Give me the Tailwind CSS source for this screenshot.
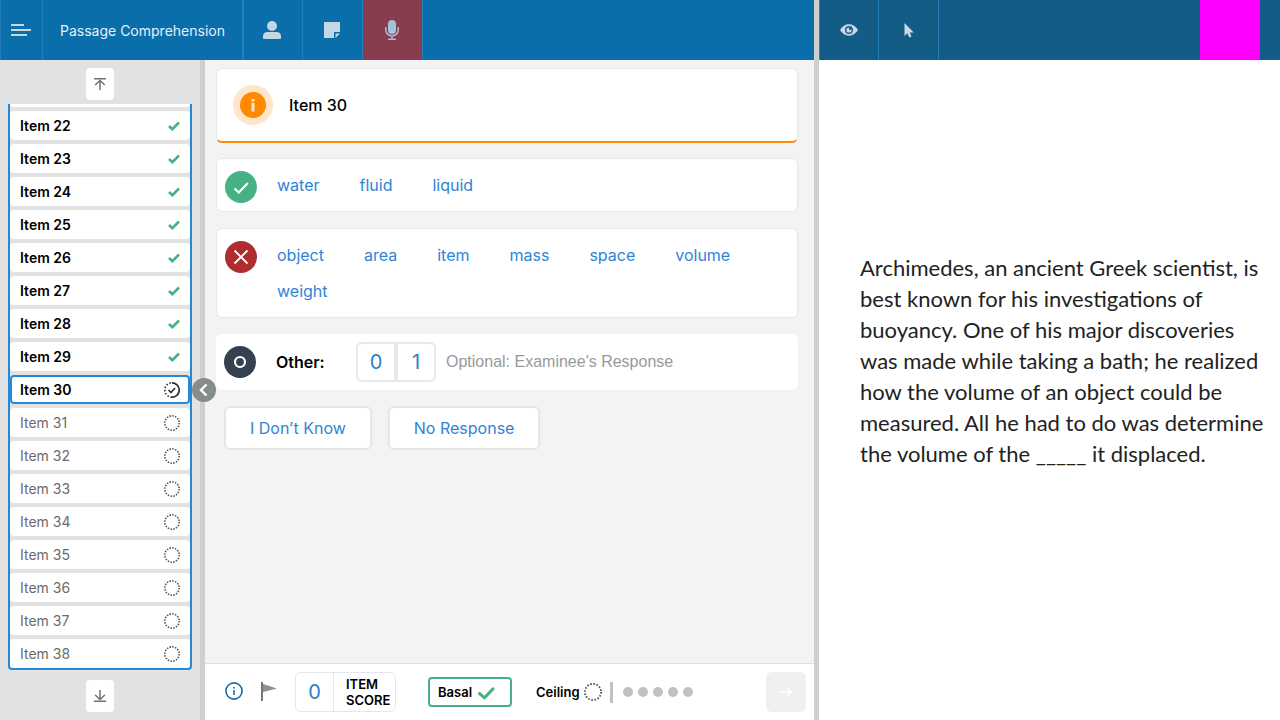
<!DOCTYPE html>
<html lang="en">
<head>
<meta charset="utf-8">
<title>Passage Comprehension</title>
<script src="https://cdn.jsdelivr.net/npm/@tailwindcss/browser@4"></script>
</head>
<body class="font-['Inter',sans-serif] text-black">
<svg class="hidden">
  <symbol id="tick" viewBox="0 0 12 10"><path d="M1 5l3.400 3.200L11 1.500" fill="none" stroke="#46b182" stroke-width="2.600"/></symbol>
  <symbol id="dots" viewBox="1 1 16 16"><circle cx="9" cy="9" r="7.200" fill="none" stroke="#555" stroke-width="1.600" stroke-dasharray="1.500 1.328"/></symbol>
</svg>
<div class="flex h-screen overflow-hidden">
  <div class="flex min-w-0 flex-[814] flex-col">
    <header class="flex h-[60px] shrink-0 bg-[#0a6eaa] text-[#c5d7e5]">
      <button aria-label="Menu" class="flex w-[43px] items-center justify-center border-x border-[#237eb9] pr-[2px]">
        <svg class="h-3 w-5" viewBox="0 0 20 12" stroke="currentColor" stroke-width="2"><path d="M0 1h13M0 6h20M0 11h16"/></svg>
      </button>
      <h1 class="flex w-[201px] items-center justify-center border-r-2 border-[#237eb9] pt-[2px] text-sm text-[#e6f0f7]">Passage Comprehension</h1>
      <button aria-label="Examinee" class="flex w-[59px] items-center justify-center border-r border-[#237eb9] pr-[2px]">
        <svg class="h-[18px] w-[18px]" viewBox="0 0 18 18" fill="currentColor"><circle cx="9" cy="5" r="5"/><path d="M0 18v-2.500Q0 11 4.500 11h9Q18 11 18 15.500V17q0 1-1 1H1q-1 0-1-1z"/></svg>
      </button>
      <button aria-label="Notes" class="flex w-[60px] items-center justify-center border-r border-[#237eb9] pr-[2px]">
        <svg class="h-4 w-4" viewBox="0 0 16 16" fill="currentColor"><path d="M0 0h16v10h-6v6H0z"/><path d="M11.500 11.500H16L11.500 16z"/></svg>
      </button>
      <button aria-label="Record audio" class="flex w-[60px] items-center justify-center border-r border-[#237eb9] bg-[#873d4e] pr-[2px]">
        <svg class="h-5 w-[14px]" viewBox="0 0 14 20"><rect x="3" y="0" width="8" height="14" rx="4" fill="#a3c3da"/><path d="M.8 7v3a6.200 5.800 0 0 0 12.400 0V7M7 16v3M3 19.200h8" fill="none" stroke="#a9bccb" stroke-width="1.500"/></svg>
      </button>
    </header>
    <div class="flex min-h-0 flex-1">
      <nav aria-label="Items" class="relative flex w-[205px] shrink-0 flex-col items-center border-r-[5px] border-[#cfcfcf] bg-[#e2e2e2] px-2 py-2">
        <button aria-label="First item" class="flex h-8 w-7 shrink-0 items-center justify-center rounded bg-white">
          <svg class="h-3 w-3" viewBox="0 0 12 12" fill="none" stroke="#6f7272" stroke-width="1.500"><path d="M0 .8h12M6 12V2.500M1.200 7L6 2.500 10.800 7"/></svg>
        </button>
        <ul id="items" class="mt-1 flex min-h-0 w-full flex-1 flex-col justify-end gap-1 overflow-hidden rounded-b border-x-2 border-b-2 border-[#2589d8]"></ul>
        <button aria-label="Last item" class="mt-[10px] flex h-8 w-7 shrink-0 items-center justify-center rounded bg-white">
          <svg class="h-3 w-3" viewBox="0 0 12 12" fill="none" stroke="#6f7272" stroke-width="1.500"><path d="M0 11.200h12M6 0v9.500M1.200 5L6 9.500 10.800 5"/></svg>
        </button>
        <button aria-label="Collapse items" class="absolute top-1/2 -right-4 z-10 flex h-6 w-6 -translate-y-1/2 items-center justify-center rounded-full bg-[#868b8b]">
          <svg class="h-3 w-3" viewBox="0 0 12 12" fill="none" stroke="#fff" stroke-width="2.400"><path d="M8.500 .5L3 6l5.500 5.500"/></svg>
        </button>
      </nav>
      <div class="flex min-w-0 flex-1 flex-col bg-[#f3f3f3]">
        <main class="flex-1 pt-2 pr-4 pl-[11px]">
          <section class="flex h-[75px] items-center gap-4 rounded-md border border-b-2 border-[#e3e6f1] border-b-[#ff8a00] bg-white px-4">
            <span class="flex h-10 w-10 items-center justify-center rounded-full bg-[#ffe6cb]">
              <svg class="h-[26px] w-[26px]" viewBox="0 0 26 26"><circle cx="13" cy="13" r="13" fill="#ff8a00"/><path d="M11.500 7h3v2.500h-3zM11.500 11h3v8.500h-3z" fill="#ffe6cb"/></svg>
            </span>
            <h2 class="text-base font-medium">Item 30</h2>
          </section>
          <section class="mt-[15px] flex items-start gap-5 rounded-md border border-[#e3e6f1] bg-white p-2">
            <svg class="mt-1 h-8 w-8 shrink-0" viewBox="0 0 32 32" role="img" aria-label="Correct"><circle cx="16" cy="16" r="16" fill="#46b182"/><path d="M9.500 17.500l4.300 4 9-9.500" fill="none" stroke="#fff" stroke-width="2.200"/></svg>
            <div class="flex flex-wrap gap-x-10 text-base leading-9 text-[#2f84d6]">
              <button>water</button><button>fluid</button><button>liquid</button>
            </div>
          </section>
          <section class="mt-4 flex items-start gap-5 rounded-md border border-[#e3e6f1] bg-white p-2">
            <svg class="mt-1 h-8 w-8 shrink-0" viewBox="0 0 32 32" role="img" aria-label="Incorrect"><circle cx="16" cy="16" r="16" fill="#b02c2e"/><path d="M9.500 9.500l13 13M22.500 9.500l-13 13" fill="none" stroke="#fff" stroke-width="1.800"/></svg>
            <div class="flex flex-wrap gap-x-10 text-base leading-9 text-[#2f84d6]">
              <button>object</button><button>area</button><button>item</button><button>mass</button><button>space</button><button>volume</button><button>weight</button>
            </div>
          </section>
          <section class="mt-4 flex h-14 items-center rounded-md bg-white px-2">
            <svg class="h-8 w-8 shrink-0" viewBox="0 0 32 32" aria-hidden="true"><circle cx="16" cy="16" r="16" fill="#35414f"/><circle cx="16" cy="16" r="5" fill="none" stroke="#fff" stroke-width="2.200"/></svg>
            <label for="other" class="ml-5 w-20 text-base font-semibold">Other:</label>
            <div class="flex h-10 w-20 shrink-0 rounded-md border-2 border-[#e8e8e8] text-xl text-[#2b7fc3]">
              <button class="flex-1 border-r-2 border-[#e8e8e8]">0</button><button class="flex-1 border-l-2 border-[#e8e8e8]">1</button>
            </div>
            <input id="other" type="text" placeholder="Optional: Examinee's Response" class="ml-[10px] min-w-0 flex-1 font-['Liberation_Sans',sans-serif] text-base outline-none placeholder:text-[#999]">
          </section>
          <div class="mt-4 flex gap-4 pl-2 text-base text-[#2f84d6]">
            <button class="h-11 rounded-md border-2 border-[#e3e6f1] bg-white px-6">I Don’t Know</button>
            <button class="h-11 rounded-md border-2 border-[#e3e6f1] bg-white px-6">No Response</button>
          </div>
        </main>
        <footer class="flex h-[57px] shrink-0 items-center border-t border-[#dedede] bg-white pr-2 pl-5">
          <button aria-label="Information" class="pb-[2px]"><svg class="h-[18px] w-[18px]" viewBox="0 0 18 18" fill="none" stroke="#146fa8" stroke-width="1.600"><circle cx="9" cy="9" r="8.100"/><path d="M9 5v1.600M9 8v5"/></svg></button>
          <button aria-label="Flag item" class="ml-[18px] pb-[2px]"><svg class="h-[19px] w-4" viewBox="0 0 16 19"><path d="M2 2l14 4.500L2 10z" fill="#909090"/><path d="M1 0v19" stroke="#666" stroke-width="1.800"/></svg></button>
          <div class="ml-[18px] flex h-10 w-[101px] items-center rounded-md border border-[#e3e6f1]">
            <output class="flex h-full w-[38px] shrink-0 items-center justify-center border-r border-[#e3e6f1] text-xl text-[#2b7fc3]">0</output>
            <span class="ml-3 text-[13px] leading-4 font-semibold">ITEM<br>SCORE</span>
          </div>
          <div class="ml-8 flex h-[30px] w-[84px] items-center gap-1 rounded border-2 border-[#46b182] pt-[2px] pl-2 text-[13px] font-semibold">Basal
            <svg class="ml-[1px] h-[13px] w-[18px]" viewBox="0 0 18 13"><path d="M2.500 6.500l5 4.300L16 1.900" fill="none" stroke="#46b182" stroke-width="3" stroke-linecap="round"/></svg>
          </div>
          <span class="ml-6 pt-[2px] text-[13px] font-semibold">Ceiling</span>
          <svg class="ml-1 h-[18px] w-[18px] shrink-0"><use href="#dots"/></svg>
          <span class="ml-2 h-[21px] w-[3px] bg-[#bfc2c0]"></span>
          <div class="ml-[10px] flex gap-[5px]">
            <i class="size-[10px] rounded-full bg-[#bfc2c0]"></i><i class="size-[10px] rounded-full bg-[#bfc2c0]"></i><i class="size-[10px] rounded-full bg-[#bfc2c0]"></i><i class="size-[10px] rounded-full bg-[#bfc2c0]"></i><i class="size-[10px] rounded-full bg-[#bfc2c0]"></i>
          </div>
          <button aria-label="Next" class="ml-auto flex size-10 shrink-0 items-center justify-center rounded-md bg-[#f0f0f0]">
            <svg class="h-3 w-3" viewBox="0 0 12 12" fill="none" stroke="#fff" stroke-width="1.600"><path d="M0 6h11M6 1l5 5-5 5"/></svg>
          </button>
        </footer>
      </div>
    </div>
  </div>
  <div class="w-[5px] shrink-0 bg-[#cfcfcf]"></div>
  <div class="flex min-w-0 flex-[461] flex-col bg-white">
    <header class="flex h-[60px] shrink-0 bg-[#125c86] text-[#c9d8e4]">
      <button aria-label="Show stimulus" class="flex w-[60px] items-center justify-center border-x border-[#237eb9]">
        <svg class="h-3 w-[18px]" viewBox="0 0 18 12"><path d="M0 6Q3.500 .3 9 .3T18 6Q14.500 11.700 9 11.700T0 6z" fill="currentColor"/><circle cx="9" cy="6" r="3.300" fill="none" stroke="#125c86" stroke-width="1.400"/><circle cx="10.200" cy="4.800" r="1.300" fill="#125c86"/></svg>
      </button>
      <button aria-label="Pointer" class="flex w-[60px] items-center justify-center border-r border-[#237eb9]">
        <svg class="h-[15px] w-[10px]" viewBox="0 0 10 15" fill="currentColor"><path d="M.5 0v13l2.800-2.800L5.300 14.500l2.200-1L5.800 9.500h4z"/></svg>
      </button>
      <div class="mr-5 ml-auto w-[60px] bg-[#f0f]"></div>
    </header>
    <article class="flex flex-1 items-center pb-[60px] pl-[41px]">
      <p class="font-['Lato',sans-serif] text-[22px] leading-[31px] whitespace-nowrap text-[#222]">Archimedes, an ancient Greek scientist, is<br>best known for his investigations of<br>buoyancy. One of his major discoveries<br>was made while taking a bath; he realized<br>how the volume of an object could be<br>measured. All he had to do was determine<br>the volume of the _____ it displaced.</p>
    </article>
  </div>
</div>
<script>
const list = document.getElementById('items');
for (let n = 21; n <= 38; n++) {
  const li = document.createElement('li');
  const state = n < 30
    ? ['font-semibold', '<svg class="h-[10px] w-3"><use href="#tick"/></svg>']
    : n === 30
    ? ['font-semibold outline-2 -outline-offset-2 outline-[#2589d8]', '<svg class="h-4 w-4" viewBox="1 1 16 16" fill="none" stroke="#333" stroke-width="1.700"><path d="M9 1.800a7.200 7.200 0 0 1 0 14.400"/><path d="M9 16.200a7.200 7.200 0 0 1 0-14.400" stroke-dasharray="1.500 1.800"/><path d="M5.500 9l2.500 2.500 4-4.500"/></svg>']
    : ['text-[#6b6b6b]', '<svg class="h-4 w-4"><use href="#dots"/></svg>'];
  li.className = 'shrink-0';
  li.innerHTML = `<button class="flex h-[29px] w-full items-center justify-between rounded bg-white px-[10px] text-sm ${state[0]}">Item ${n}${state[1]}</button>`;
  list.append(li);
}
</script>
</body>
</html>
